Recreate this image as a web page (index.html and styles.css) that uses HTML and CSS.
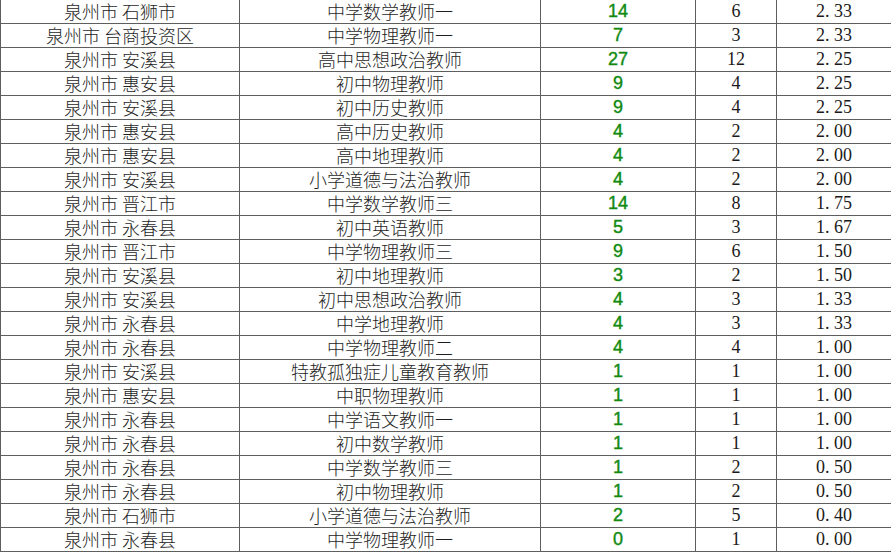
FILE: index.html
```html
<!DOCTYPE html>
<html lang="zh">
<head>
<meta charset="utf-8">
<title>泉州市 岗位报名比例</title>
<link rel="stylesheet" href="styles.css">
</head>
<body>
<table class="sheet">
  <colgroup>
    <col class="c-area"><col class="c-post"><col class="c-apply"><col class="c-plan"><col class="c-ratio">
  </colgroup>
  <tbody>
    <tr><td>泉州市 石狮市</td><td>中学数学教师一</td><td class="g">14</td><td class="n">6</td><td class="n">2<span class="dot">.</span>33</td></tr>
    <tr><td>泉州市 台商投资区</td><td>中学物理教师一</td><td class="g">7</td><td class="n">3</td><td class="n">2<span class="dot">.</span>33</td></tr>
    <tr><td>泉州市 安溪县</td><td>高中思想政治教师</td><td class="g">27</td><td class="n">12</td><td class="n">2<span class="dot">.</span>25</td></tr>
    <tr><td>泉州市 惠安县</td><td>初中物理教师</td><td class="g">9</td><td class="n">4</td><td class="n">2<span class="dot">.</span>25</td></tr>
    <tr><td>泉州市 安溪县</td><td>初中历史教师</td><td class="g">9</td><td class="n">4</td><td class="n">2<span class="dot">.</span>25</td></tr>
    <tr><td>泉州市 惠安县</td><td>高中历史教师</td><td class="g">4</td><td class="n">2</td><td class="n">2<span class="dot">.</span>00</td></tr>
    <tr><td>泉州市 惠安县</td><td>高中地理教师</td><td class="g">4</td><td class="n">2</td><td class="n">2<span class="dot">.</span>00</td></tr>
    <tr><td>泉州市 安溪县</td><td>小学道德与法治教师</td><td class="g">4</td><td class="n">2</td><td class="n">2<span class="dot">.</span>00</td></tr>
    <tr><td>泉州市 晋江市</td><td>中学数学教师三</td><td class="g">14</td><td class="n">8</td><td class="n">1<span class="dot">.</span>75</td></tr>
    <tr><td>泉州市 永春县</td><td>初中英语教师</td><td class="g">5</td><td class="n">3</td><td class="n">1<span class="dot">.</span>67</td></tr>
    <tr><td>泉州市 晋江市</td><td>中学物理教师三</td><td class="g">9</td><td class="n">6</td><td class="n">1<span class="dot">.</span>50</td></tr>
    <tr><td>泉州市 安溪县</td><td>初中地理教师</td><td class="g">3</td><td class="n">2</td><td class="n">1<span class="dot">.</span>50</td></tr>
    <tr><td>泉州市 安溪县</td><td>初中思想政治教师</td><td class="g">4</td><td class="n">3</td><td class="n">1<span class="dot">.</span>33</td></tr>
    <tr><td>泉州市 永春县</td><td>中学地理教师</td><td class="g">4</td><td class="n">3</td><td class="n">1<span class="dot">.</span>33</td></tr>
    <tr><td>泉州市 永春县</td><td>中学物理教师二</td><td class="g">4</td><td class="n">4</td><td class="n">1<span class="dot">.</span>00</td></tr>
    <tr><td>泉州市 安溪县</td><td>特教孤独症儿童教育教师</td><td class="g">1</td><td class="n">1</td><td class="n">1<span class="dot">.</span>00</td></tr>
    <tr><td>泉州市 惠安县</td><td>中职物理教师</td><td class="g">1</td><td class="n">1</td><td class="n">1<span class="dot">.</span>00</td></tr>
    <tr><td>泉州市 永春县</td><td>中学语文教师一</td><td class="g">1</td><td class="n">1</td><td class="n">1<span class="dot">.</span>00</td></tr>
    <tr><td>泉州市 永春县</td><td>初中数学教师</td><td class="g">1</td><td class="n">1</td><td class="n">1<span class="dot">.</span>00</td></tr>
    <tr><td>泉州市 永春县</td><td>中学数学教师三</td><td class="g">1</td><td class="n">2</td><td class="n">0<span class="dot">.</span>50</td></tr>
    <tr><td>泉州市 永春县</td><td>初中物理教师</td><td class="g">1</td><td class="n">2</td><td class="n">0<span class="dot">.</span>50</td></tr>
    <tr><td>泉州市 石狮市</td><td>小学道德与法治教师</td><td class="g">2</td><td class="n">5</td><td class="n">0<span class="dot">.</span>40</td></tr>
    <tr><td>泉州市 永春县</td><td>中学物理教师一</td><td class="g">0</td><td class="n">1</td><td class="n">0<span class="dot">.</span>00</td></tr>
  </tbody>
</table>
</body>
</html>
```

FILE: styles.css
```css
html, body {
  margin: 0;
  padding: 0;
  background: #ffffff;
}

.sheet {
  border-collapse: collapse;
  table-layout: fixed;
  width: 891px;
  font-family: "Noto Sans CJK SC", "Liberation Serif", sans-serif;
  font-size: 18px;
  color: #1e1e1e;
}

.c-area { width: 239px; }
.c-post { width: 301px; }
.c-apply { width: 155px; }
.c-plan { width: 81px; }
.c-ratio { width: 115px; }

.sheet td {
  height: 23px;
  padding: 0;
  border: 1px solid #5e5e5e;
  border-top: none;
  text-align: center;
  vertical-align: middle;
  line-height: 23px;
  white-space: nowrap;
  font-weight: 300;
}

.sheet td.g {
  font-family: "Liberation Sans", Arial, sans-serif;
  font-size: 18px;
  font-weight: 400;
  color: #128a12;
  -webkit-text-stroke: 0.4px #128a12;
}

.sheet td.n {
  font-family: "Liberation Serif", serif;
  font-size: 18px;
  font-weight: 400;
  color: #1a1a1a;
}

.dot {
  padding-right: 0.25em;
}
```
